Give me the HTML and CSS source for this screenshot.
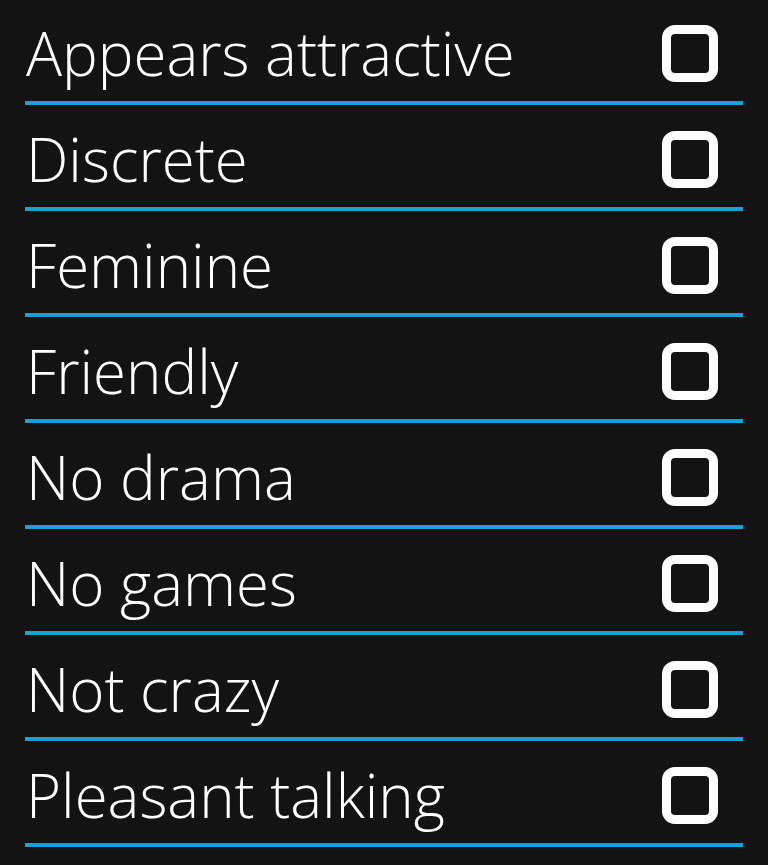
FILE: index.html
```html
<!DOCTYPE html>
<html>
<head>
<meta charset="utf-8">
<link rel="stylesheet" href="styles.css">
</head>
<body>
<ul class="list">
  <li class="row"><span class="label">Appears attractive</span><span class="check"></span></li>
  <li class="row"><span class="label">Discrete</span><span class="check"></span></li>
  <li class="row"><span class="label">Feminine</span><span class="check"></span></li>
  <li class="row"><span class="label">Friendly</span><span class="check"></span></li>
  <li class="row"><span class="label">No drama</span><span class="check"></span></li>
  <li class="row"><span class="label">No games</span><span class="check"></span></li>
  <li class="row"><span class="label">Not crazy</span><span class="check"></span></li>
  <li class="row"><span class="label">Pleasant talking</span><span class="check"></span></li>
</ul>
</body>
</html>
```
FILE: styles.css
```css
html, body {
  margin: 0;
  padding: 0;
  background: #131313;
  height: 100%;
  overflow: hidden;
}
.list {
  list-style: none;
  margin: -1px 25px 0 25px;
  padding: 0;
}
.row {
  height: 102px;
  box-sizing: content-box;
  border-bottom: 4px solid #1aa0d8;
  display: flex;
  align-items: center;
  justify-content: space-between;
}
.label {
  font-family: "Open Sans", sans-serif;
  font-weight: 300;
  font-size: 60px;
  color: #ffffff;
  line-height: 1;
  padding-top: 6px;
  margin-left: 1px;
}
.check {
  width: 38px;
  height: 39px;
  border: 9px solid #ffffff;
  border-radius: 13px;
  margin-right: 25px;
  margin-top: 7px;
}
```
